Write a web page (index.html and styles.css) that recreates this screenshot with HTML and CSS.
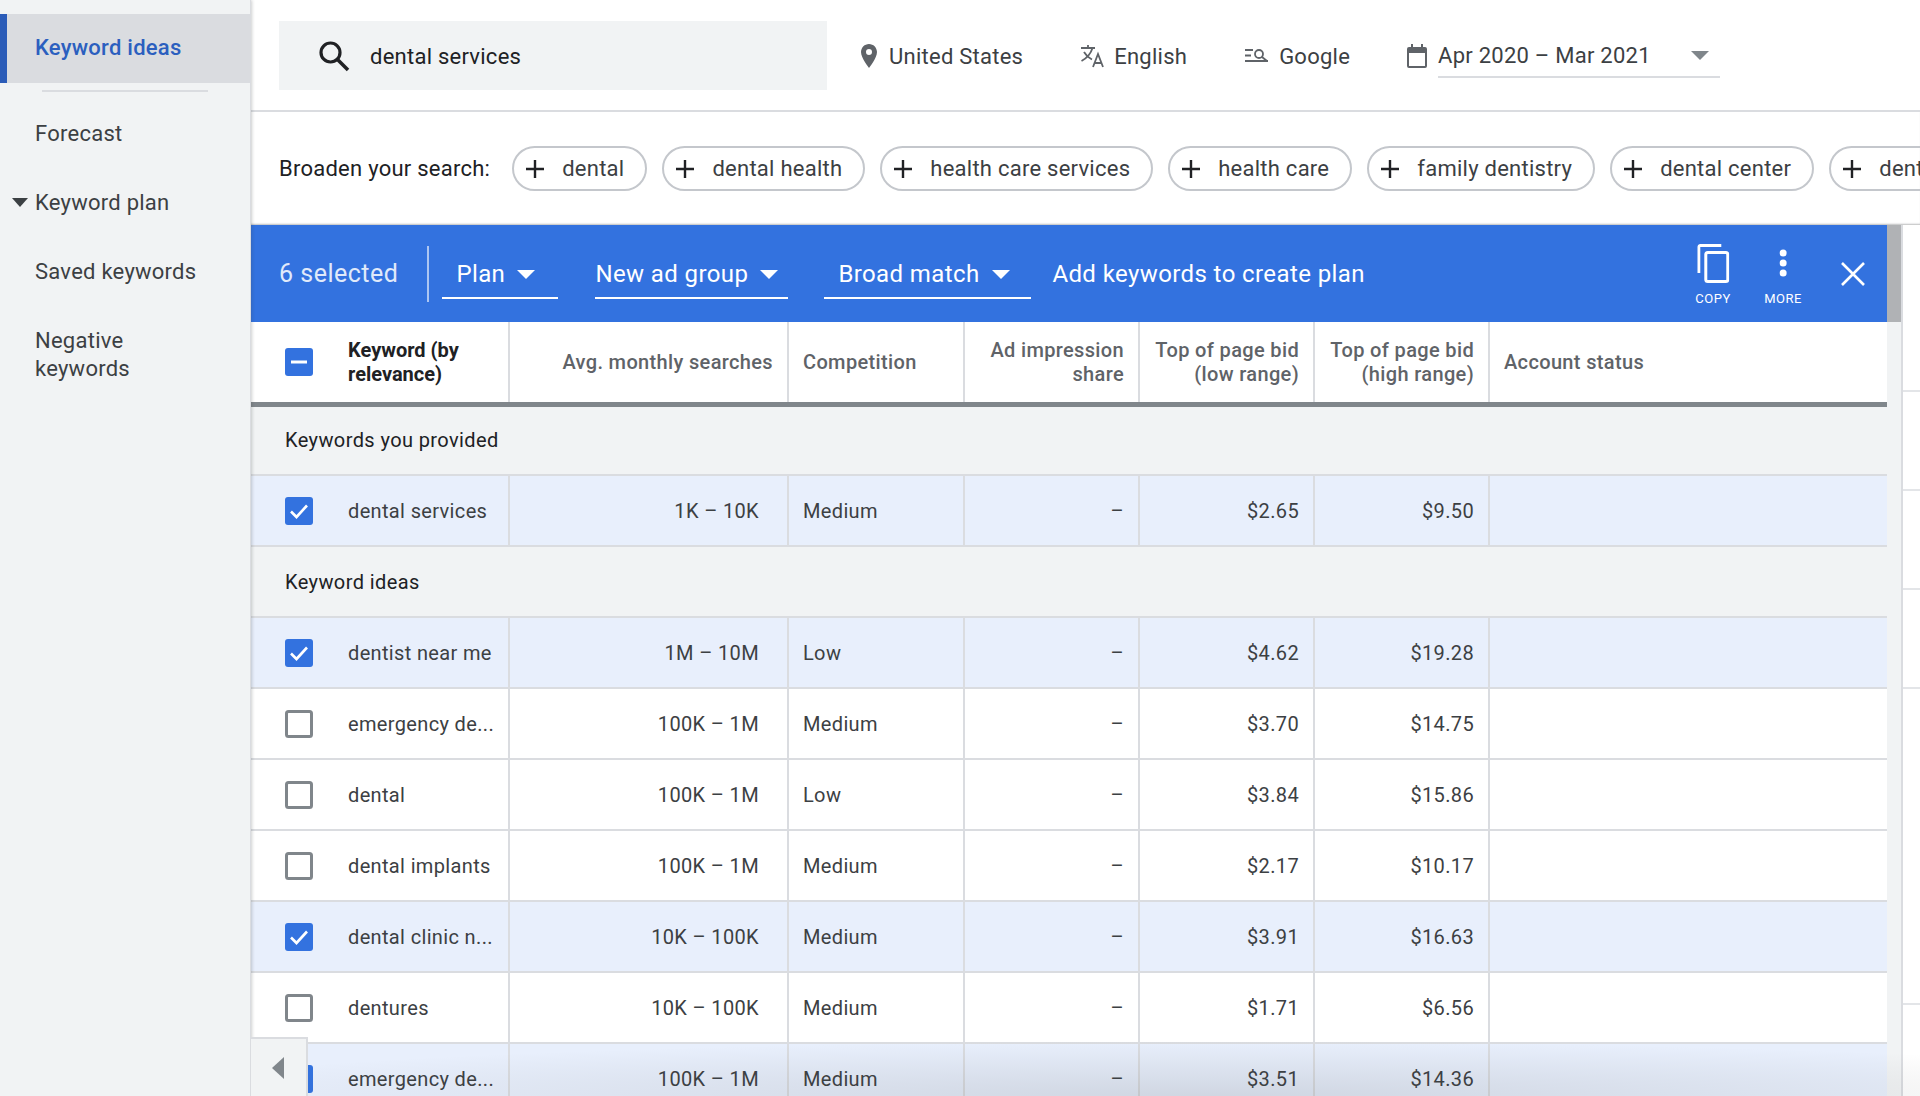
FILE: index.html
```html
<!DOCTYPE html>
<html>
<head>
  <meta charset="UTF-8">
  <title>Keyword ideas</title>
  <link rel="stylesheet" href="styles.css">
</head>
<body>
  <svg class="defs">
    <symbol id="box-on" viewBox="0 0 28 28"><rect width="28" height="28" rx="3" fill="#3372df"/><path d="M6 14.500l5.500 5.500L22 8.500" fill="none" stroke="#fff" stroke-width="2.600"/></symbol>
    <symbol id="box-off" viewBox="0 0 28 28"><rect x="1.500" y="1.500" width="25" height="25" rx="2" fill="#fff" stroke="#80868b" stroke-width="3"/></symbol>
    <symbol id="box-some" viewBox="0 0 28 28"><rect width="28" height="28" rx="3" fill="#3372df"/><rect x="6" y="12.500" width="16" height="3" fill="#fff"/></symbol>
    <symbol id="plus" viewBox="0 0 20 20"><path d="M10 1v18M1 10h18" fill="none" stroke="#202124" stroke-width="2.400"/></symbol>
  </svg>

  <div class="app">
    <nav class="sidebar">
      <a class="nav-item active">Keyword ideas</a>
      <div class="nav-divider"></div>
      <a class="nav-item forecast">Forecast</a>
      <a class="nav-item plan"><span class="nav-arrow"></span>Keyword plan</a>
      <a class="nav-item saved">Saved keywords</a>
      <a class="nav-item negative">Negative<br>keywords</a>
    </nav>

    <main class="content">
      <div class="search-row">
        <div class="search-box">
          <svg class="search-icon" viewBox="0 0 32 32"><circle cx="12.500" cy="12.500" r="9.500" fill="none" stroke="#202124" stroke-width="3.200"/><path d="M19.500 19.500L30 30" stroke="#202124" stroke-width="3.600"/></svg>
          <span>dental services</span>
        </div>
        <div class="filter filter-location">
          <svg class="icon-pin" viewBox="0 0 16 24"><path fill-rule="evenodd" d="M8 0C3.600 0 0 3.600 0 8c0 6 8 16 8 16s8-10 8-16c0-4.400-3.600-8-8-8zm0 11a3 3 0 1 1 0-6 3 3 0 0 1 0 6z" fill="#5f6368"/></svg>
          <span>United States</span>
        </div>
        <div class="filter filter-lang">
          <svg class="icon-lang" viewBox="0 0 25 24"><path d="M1 4h14M8 1v3M12.500 4C11 9 7 14 1.500 17M4 8c2 3.500 5 6 8 7.500M13 23l5-13 5 13M15 19h7" fill="none" stroke="#5f6368" stroke-width="1.800"/></svg>
          <span>English</span>
        </div>
        <div class="filter filter-network">
          <svg class="icon-network" viewBox="0 0 24 15"><path d="M0 2h8M0 7.500h6M0 13h23" fill="none" stroke="#5f6368" stroke-width="1.800"/><circle cx="14" cy="6" r="4" fill="none" stroke="#5f6368" stroke-width="1.800"/><path d="M17 9l5 4" stroke="#5f6368" stroke-width="1.800"/></svg>
          <span>Google</span>
        </div>
        <div class="filter filter-date">
          <svg class="icon-cal" viewBox="0 0 20 24"><path d="M4 0h2v3h8V0h2v3h2a2 2 0 0 1 2 2v17a2 2 0 0 1-2 2H2a2 2 0 0 1-2-2V5a2 2 0 0 1 2-2h2zM2 9v13h16V9z" fill="#5f6368"/></svg>
          <div class="date-select">
            <span>Apr 2020 – Mar 2021</span>
            <span class="date-arrow"></span>
          </div>
        </div>
      </div>

      <div class="broaden-row">
        <span class="broaden-label">Broaden your search:</span>
        <span class="pill"><svg class="pill-plus"><use href="#plus"/></svg>dental</span>
        <span class="pill"><svg class="pill-plus"><use href="#plus"/></svg>dental health</span>
        <span class="pill"><svg class="pill-plus"><use href="#plus"/></svg>health care services</span>
        <span class="pill"><svg class="pill-plus"><use href="#plus"/></svg>health care</span>
        <span class="pill"><svg class="pill-plus"><use href="#plus"/></svg>family dentistry</span>
        <span class="pill"><svg class="pill-plus"><use href="#plus"/></svg>dental center</span>
        <span class="pill"><svg class="pill-plus"><use href="#plus"/></svg>dental care</span>
      </div>

      <div class="results">
        <div class="results-main">
          <div class="toolbar">
            <span class="selected-count">6 selected</span>
            <span class="toolbar-divider"></span>
            <span class="drop drop-plan">Plan<span class="drop-arrow"></span></span>
            <span class="drop drop-group">New ad group<span class="drop-arrow"></span></span>
            <span class="drop drop-match">Broad match<span class="drop-arrow"></span></span>
            <span class="toolbar-action">Add keywords to create plan</span>
            <span class="tool tool-copy">
              <svg class="icon-copy" viewBox="0 0 32 39"><path d="M24 1.500H3a1.500 1.500 0 0 0-1.500 1.500v26" fill="none" stroke="#fff" stroke-width="3"/><rect x="8.500" y="8.500" width="22" height="29" rx="2" fill="none" stroke="#fff" stroke-width="3"/></svg>
              <span class="tool-label">COPY</span>
            </span>
            <span class="tool tool-more">
              <svg class="icon-more" viewBox="0 0 8 28"><circle cx="4" cy="4" r="3.500" fill="#fff"/><circle cx="4" cy="14" r="3.500" fill="#fff"/><circle cx="4" cy="24" r="3.500" fill="#fff"/></svg>
              <span class="tool-label">MORE</span>
            </span>
            <svg class="icon-close" viewBox="0 0 24 24"><path d="M1 1l22 22M23 1L1 23" fill="none" stroke="#fff" stroke-width="2.600"/></svg>
          </div>

          <table class="kw-table">
            <colgroup>
              <col class="col-kw"><col class="col-avg"><col class="col-comp"><col class="col-share"><col class="col-low"><col class="col-high"><col class="col-status">
            </colgroup>
            <thead>
              <tr>
                <th class="kw-cell kw-head"><div class="kw-wrap"><svg class="box"><use href="#box-some"/></svg><span>Keyword (by relevance)</span></div></th>
                <th class="num">Avg. monthly searches</th>
                <th>Competition</th>
                <th class="num">Ad impression share</th>
                <th class="num">Top of page bid (low range)</th>
                <th class="num">Top of page bid (high range)</th>
                <th>Account status</th>
              </tr>
            </thead>
            <tbody>
              <tr class="group"><td colspan="7">Keywords you provided</td></tr>
              <tr class="on"><td class="kw-cell"><div class="kw-wrap"><svg class="box"><use href="#box-on"/></svg><span>dental services</span></div></td><td class="num wide">1K – 10K</td><td>Medium</td><td class="num">–</td><td class="num">$2.65</td><td class="num">$9.50</td><td></td></tr>
              <tr class="group"><td colspan="7">Keyword ideas</td></tr>
              <tr class="on"><td class="kw-cell"><div class="kw-wrap"><svg class="box"><use href="#box-on"/></svg><span>dentist near me</span></div></td><td class="num wide">1M – 10M</td><td>Low</td><td class="num">–</td><td class="num">$4.62</td><td class="num">$19.28</td><td></td></tr>
              <tr><td class="kw-cell"><div class="kw-wrap"><svg class="box"><use href="#box-off"/></svg><span>emergency de...</span></div></td><td class="num wide">100K – 1M</td><td>Medium</td><td class="num">–</td><td class="num">$3.70</td><td class="num">$14.75</td><td></td></tr>
              <tr><td class="kw-cell"><div class="kw-wrap"><svg class="box"><use href="#box-off"/></svg><span>dental</span></div></td><td class="num wide">100K – 1M</td><td>Low</td><td class="num">–</td><td class="num">$3.84</td><td class="num">$15.86</td><td></td></tr>
              <tr><td class="kw-cell"><div class="kw-wrap"><svg class="box"><use href="#box-off"/></svg><span>dental implants</span></div></td><td class="num wide">100K – 1M</td><td>Medium</td><td class="num">–</td><td class="num">$2.17</td><td class="num">$10.17</td><td></td></tr>
              <tr class="on"><td class="kw-cell"><div class="kw-wrap"><svg class="box"><use href="#box-on"/></svg><span>dental clinic n...</span></div></td><td class="num wide">10K – 100K</td><td>Medium</td><td class="num">–</td><td class="num">$3.91</td><td class="num">$16.63</td><td></td></tr>
              <tr><td class="kw-cell"><div class="kw-wrap"><svg class="box"><use href="#box-off"/></svg><span>dentures</span></div></td><td class="num wide">10K – 100K</td><td>Medium</td><td class="num">–</td><td class="num">$1.71</td><td class="num">$6.56</td><td></td></tr>
              <tr class="on"><td class="kw-cell"><div class="kw-wrap"><svg class="box"><use href="#box-on"/></svg><span>emergency de...</span></div></td><td class="num wide">100K – 1M</td><td>Medium</td><td class="num">–</td><td class="num">$3.51</td><td class="num">$14.36</td><td></td></tr>
            </tbody>
          </table>
        </div>
        <div class="scrollbar"><div class="scroll-thumb"></div></div>
        <div class="side-gutter">
          <div class="gutter-row first"></div>
          <div class="gutter-row"></div>
          <div class="gutter-row"></div>
          <div class="gutter-row"></div>
          <div class="gutter-row last"></div>
        </div>
      </div>
    </main>

    <button class="collapse"><span class="collapse-arrow"></span></button>
    <div class="bottom-shade"></div>
  </div>
</body>
</html>
```

FILE: styles.css
```css
html, body {
  margin: 0;
  height: 100%;
  overflow: hidden;
}
body {
  font-family: Roboto, "Liberation Sans", sans-serif;
  font-size: 22px;
  letter-spacing: 0.25px;
  color: #202124;
  background-color: #fff;
}
.defs {
  display: none;
}
.app {
  position: relative;
  display: flex;
  height: 1096px;
  overflow: hidden;
}

/* sidebar */
.sidebar {
  width: 251px;
  flex: none;
  padding-top: 14px;
  box-sizing: border-box;
  background-color: #f1f3f4;
  border-right: 1px solid #dadce0;
  box-shadow: 1px 0 3px rgba(60, 64, 67, 0.25);
  color: #3c4043;
  position: relative;
  z-index: 2;
}
.nav-item {
  display: block;
  padding-left: 35px;
  line-height: 34px;
  position: relative;
}
.nav-item.active {
  height: 69px;
  line-height: 68px;
  background-color: #dadce0;
  border-left: 7px solid #2b5cb8;
  padding-left: 28px;
  color: #2b5fbf;
  font-weight: 500;
}
.nav-divider {
  height: 2px;
  margin: 7px 42px 0;
  background-color: #dadce0;
}
.forecast { margin-top: 25px; }
.plan { margin-top: 35px; }
.saved { margin-top: 35px; }
.negative { margin-top: 38px; line-height: 28px; }
.nav-arrow {
  position: absolute;
  left: 12px;
  top: 12px;
  border-left: 8px solid transparent;
  border-right: 8px solid transparent;
  border-top: 9px solid #3c4043;
}

/* top rows */
.content {
  flex: 1;
  min-width: 0;
  display: flex;
  flex-direction: column;
}
.search-row {
  height: 112px;
  flex: none;
  box-sizing: border-box;
  border-bottom: 2px solid #dadce0;
  display: flex;
  align-items: flex-start;
  padding: 21px 0 0 28px;
}
.search-box {
  width: 548px;
  height: 69px;
  flex: none;
  display: flex;
  align-items: center;
  padding-left: 39px;
  padding-bottom: 0;
  box-sizing: border-box;
  background-color: #f1f3f4;
}
.search-box span {
  padding-top: 2px;
}
.search-icon {
  width: 32px;
  height: 32px;
  margin-right: 20px;
}
.filter {
  display: flex;
  align-items: center;
  height: 69px;
  color: #3c4043;
}
.filter > span {
  padding-top: 2px;
}
.filter-location { margin-left: 34px; }
.filter-lang { margin-left: 57px; }
.filter-network { margin-left: 58px; }
.filter-date { margin-left: 57px; align-items: flex-start; }
.icon-pin { width: 16px; height: 24px; margin-right: 12px; }
.icon-lang { width: 25px; height: 24px; margin-right: 9px; }
.icon-network { width: 24px; height: 15px; margin-right: 10px; }
.icon-cal { width: 20px; height: 24px; margin: 23px 11px 0 0; }
.date-select {
  width: 282px;
  height: 57px;
  box-sizing: border-box;
  border-bottom: 2px solid #dadce0;
  display: flex;
  justify-content: space-between;
  align-items: center;
  padding: 13px 11px 0 0;
}
.date-arrow {
  border-left: 9px solid transparent;
  border-right: 9px solid transparent;
  border-top: 9px solid #80868b;
}
.broaden-row {
  height: 113px;
  flex: none;
  display: flex;
  align-items: center;
  padding-left: 28px;
  gap: 15px;
  overflow: hidden;
  box-shadow: inset 0 -2px 2px -1px rgba(60, 64, 67, 0.35);
}
.broaden-label {
  margin-right: 7px;
  flex: none;
}
.pill {
  height: 45px;
  flex: none;
  display: flex;
  align-items: center;
  box-sizing: border-box;
  border: 2px solid #c4c7cc;
  border-radius: 23px;
  padding: 0 21px 0 11px;
  color: #3c4043;
}
.pill-plus {
  width: 20px;
  height: 20px;
  margin-right: 17px;
}

/* results area */
.results {
  flex: 1;
  min-height: 0;
  display: flex;
}
.results-main {
  width: 1636px;
  flex: none;
}
.toolbar {
  height: 97px;
  display: flex;
  align-items: center;
  background-color: #3372df;
  color: #fff;
  font-size: 24px;
  letter-spacing: 0.4px;
  position: relative;
}
.selected-count {
  margin-left: 28px;
  font-size: 25px;
  letter-spacing: 0.5px;
  opacity: 0.85;
  flex: none;
}
.toolbar-divider {
  width: 2px;
  height: 56px;
  margin-left: 29px;
  background-color: rgba(255, 255, 255, 0.6);
  flex: none;
}
.drop {
  height: 48px;
  box-sizing: border-box;
  border-bottom: 2px solid #fff;
  display: flex;
  align-items: center;
  margin-top: 3px;
  flex: none;
}
.drop-plan { width: 116px; margin-left: 13px; padding-left: 14px; }
.drop-group { width: 193px; margin-left: 37px; }
.drop-match { width: 207px; margin-left: 36px; padding-left: 14px; }
.drop-arrow {
  margin-left: 12px;
  border-left: 9px solid transparent;
  border-right: 9px solid transparent;
  border-top: 9px solid #fff;
}
.toolbar-action {
  margin-left: 21px;
  flex: none;
}
.tool {
  position: absolute;
  top: 19px;
  transform: translateX(-50%);
  display: flex;
  flex-direction: column;
  align-items: center;
  font-size: 13px;
  letter-spacing: 0.5px;
}
.tool-copy { left: 1462px; }
.tool-more { left: 1532px; }
.tool-label { margin-top: 8px; }
.icon-copy { width: 32px; height: 39px; }
.icon-more { width: 8px; height: 28px; margin: 5px 0 6px; }
.icon-close {
  position: absolute;
  left: 1590px;
  top: 37px;
  width: 24px;
  height: 24px;
}
.scrollbar {
  width: 14px;
  flex: none;
  background-color: #f1f3f4;
  border-right: 2px solid #dadce0;
}
.scroll-thumb {
  height: 97px;
  background-color: #b0b2b5;
}
.side-gutter {
  flex: 1;
}
.gutter-row {
  height: 97px;
  border-bottom: 2px solid #e3e5e8;
}
.gutter-row.first { height: 165px; }
.gutter-row.last { height: 314px; }

/* table */
.kw-table {
  width: 1636px;
  table-layout: fixed;
  border-collapse: collapse;
  font-size: 20px;
  letter-spacing: 0.35px;
}
.col-kw { width: 258px; }
.col-avg { width: 279px; }
.col-comp { width: 176px; }
.col-share { width: 175px; }
.col-low { width: 175px; }
.col-high { width: 175px; }
.kw-table th {
  height: 82px;
  padding: 0 14px;
  box-sizing: border-box;
  font-weight: 500;
  line-height: 24px;
  text-align: left;
  color: #5f6368;
  border-right: 2px solid #dadce0;
  border-bottom: 5px solid #80868b;
}
.kw-table th:last-child,
.kw-table td:last-child {
  border-right: none;
}
.kw-table td {
  height: 71px;
  padding: 0 14px;
  box-sizing: border-box;
  border-right: 2px solid #dadce0;
  border-bottom: 2px solid #dadce0;
  color: #3c4043;
}
.kw-table .num {
  text-align: right;
}
.kw-table td.wide {
  padding-right: 28px;
}
.kw-table .group td {
  background-color: #f1f3f4;
  padding-left: 34px;
  letter-spacing: 0.4px;
  color: #202124;
  border-right: none;
}
.kw-table .on td {
  background-color: #e8effc;
}
.kw-table .kw-cell {
  padding: 0 8px 0 34px;
}
.kw-wrap {
  display: flex;
  align-items: center;
  white-space: nowrap;
}
.kw-table th .kw-wrap {
  white-space: normal;
  color: #202124;
  font-weight: 700;
  letter-spacing: 0;
}
.box {
  width: 28px;
  height: 28px;
  margin-right: 35px;
  flex: none;
}

/* collapse button */
.collapse {
  position: absolute;
  left: 251px;
  top: 1037px;
  width: 57px;
  height: 59px;
  padding: 0;
  background-color: #f1f3f4;
  border: none;
  border-top: 2px solid #dadce0;
  border-right: 2px solid #dadce0;
  z-index: 3;
}
.collapse-arrow {
  display: block;
  margin-left: 21px;
  width: 0;
  border-top: 11px solid transparent;
  border-bottom: 11px solid transparent;
  border-right: 12px solid #80868b;
}
.bottom-shade {
  position: absolute;
  left: 308px;
  right: 0;
  bottom: 0;
  height: 55px;
  background: radial-gradient(ellipse 1100px 55px at 900px 100%, rgba(60, 64, 67, 0.14), rgba(60, 64, 67, 0));
  pointer-events: none;
}
```
